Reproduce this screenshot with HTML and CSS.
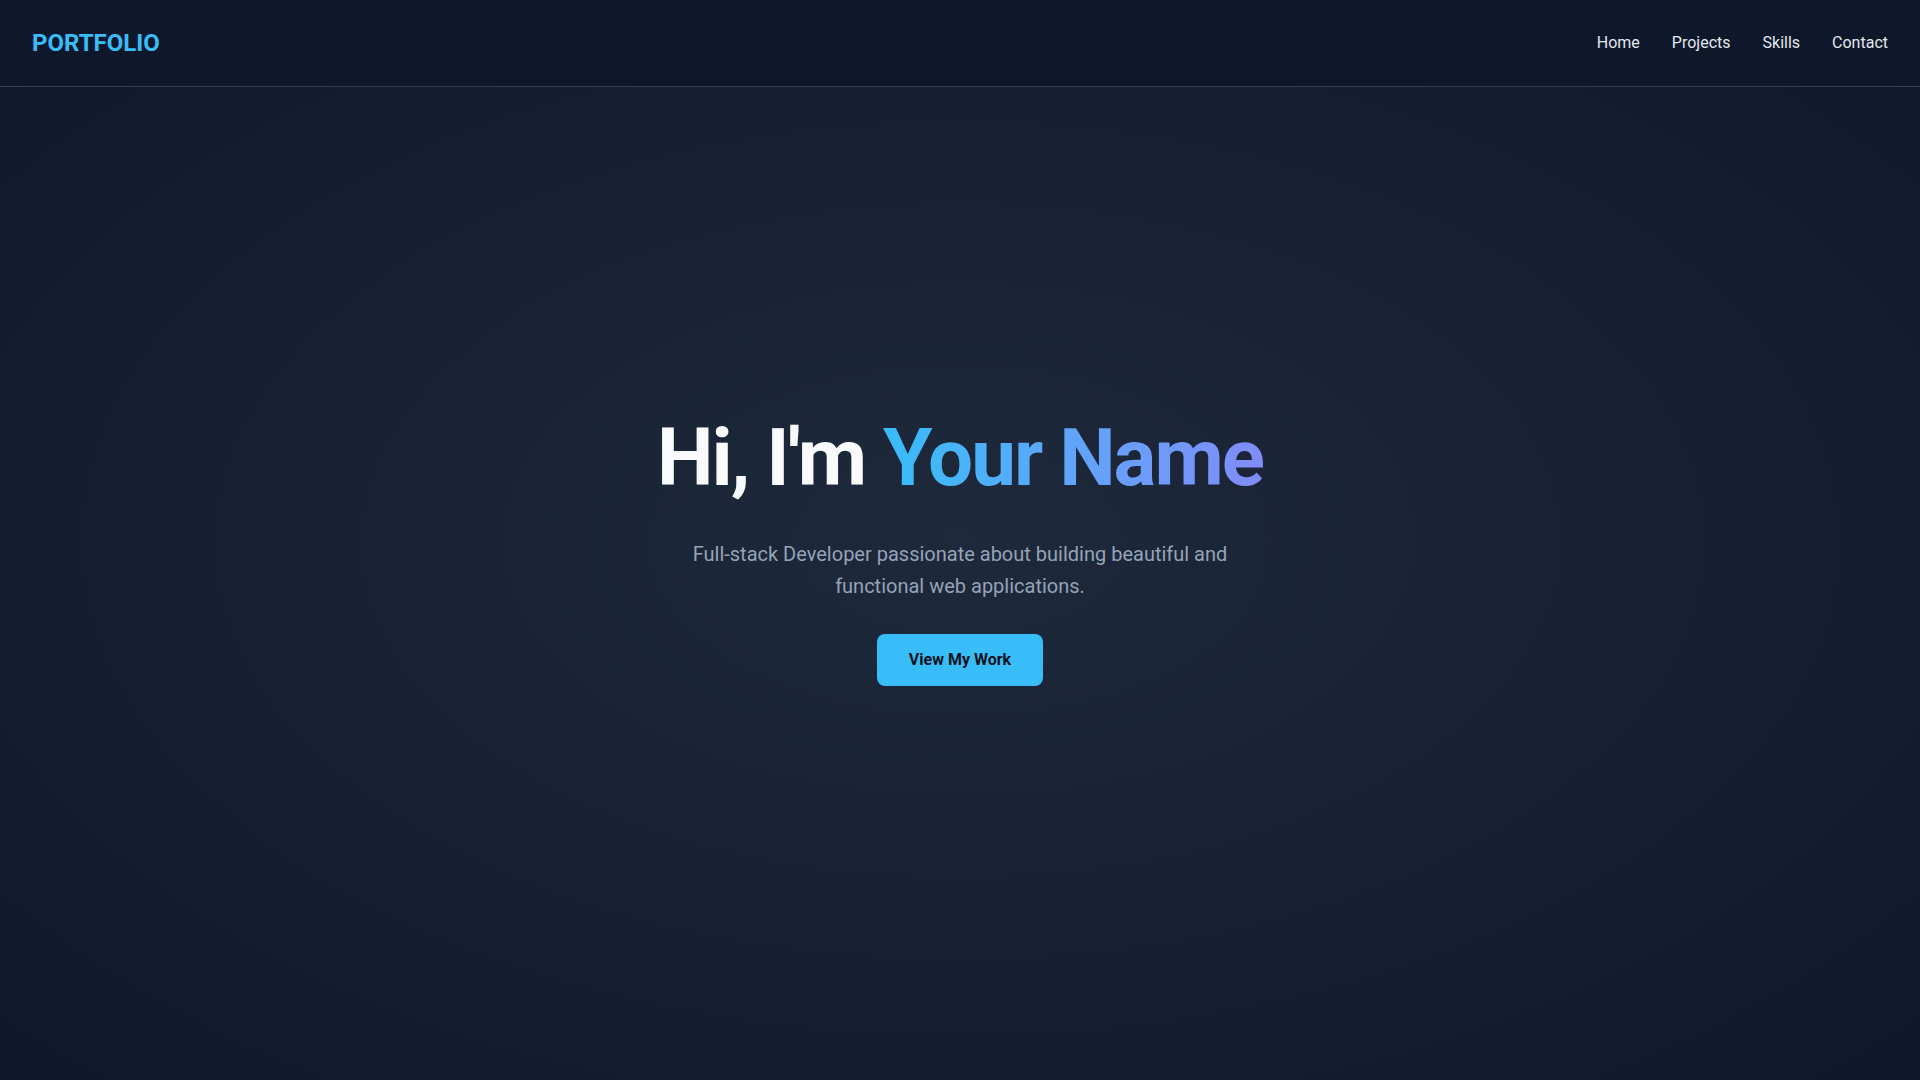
FILE: index.html
```html
<!DOCTYPE html>
<html lang="en">
<head>
<meta charset="utf-8">
<title>Portfolio</title>
<link rel="stylesheet" href="styles.css">
</head>
<body>
<header class="site-header">
  <a class="logo" href="#">PORTFOLIO</a>
  <nav class="nav">
    <a href="#">Home</a>
    <a href="#">Projects</a>
    <a href="#">Skills</a>
    <a href="#">Contact</a>
  </nav>
</header>
<main class="hero">
  <h1 class="hero-title">Hi, I'm <span class="gradient">Your Name</span></h1>
  <p class="hero-sub">Full-stack Developer passionate about building beautiful and functional web applications.</p>
  <a class="btn" href="#">View My Work</a>
</main>
</body>
</html>
```

FILE: styles.css
```css
* { box-sizing: border-box; }
html, body {
  margin: 0;
  height: 100%;
}
body {
  font-family: Roboto, "Liberation Sans", sans-serif;
  background: radial-gradient(ellipse at 50% 50%, #1e293b 0%, #172033 55%, #0f172a 100%);
  color: #f8fafc;
  overflow: hidden;
}
a { text-decoration: none; }
.site-header {
  height: 87px;
  padding: 0 32px 1px;
  display: flex;
  align-items: center;
  justify-content: space-between;
  background: #0f172a;
  border-bottom: 1px solid #334155;
}
.logo {
  font-size: 24px;
  font-weight: 700;
  color: #38bdf8;
  line-height: 32px;
  margin-top: 1px;
}
.nav {
  display: flex;
  gap: 32px;
}
.nav a {
  color: #e2e8f0;
  font-size: 16px;
  line-height: 24px;
}
.hero {
  height: calc(100vh - 87px);
  display: flex;
  flex-direction: column;
  align-items: center;
  justify-content: center;
  text-align: center;
  padding-bottom: 63px;
}
.hero-title {
  margin: 0 0 40px;
  font-size: 80px;
  line-height: 80px;
  font-weight: 700;
  letter-spacing: -2px;
  color: #f8fafc;
}
.gradient {
  background: linear-gradient(90deg, #38bdf8 0%, #60a5fa 50%, #818cf8 100%);
  -webkit-background-clip: text;
  background-clip: text;
  color: transparent;
}
.hero-sub {
  margin: 0 0 32px;
  max-width: 540px;
  font-size: 20px;
  line-height: 32px;
  color: #94a3b8;
}
.btn {
  display: inline-block;
  padding: 14px 32px;
  background: #38bdf8;
  color: #0b1220;
  font-weight: 700;
  font-size: 16px;
  line-height: 24px;
  border-radius: 8px;
}
```
